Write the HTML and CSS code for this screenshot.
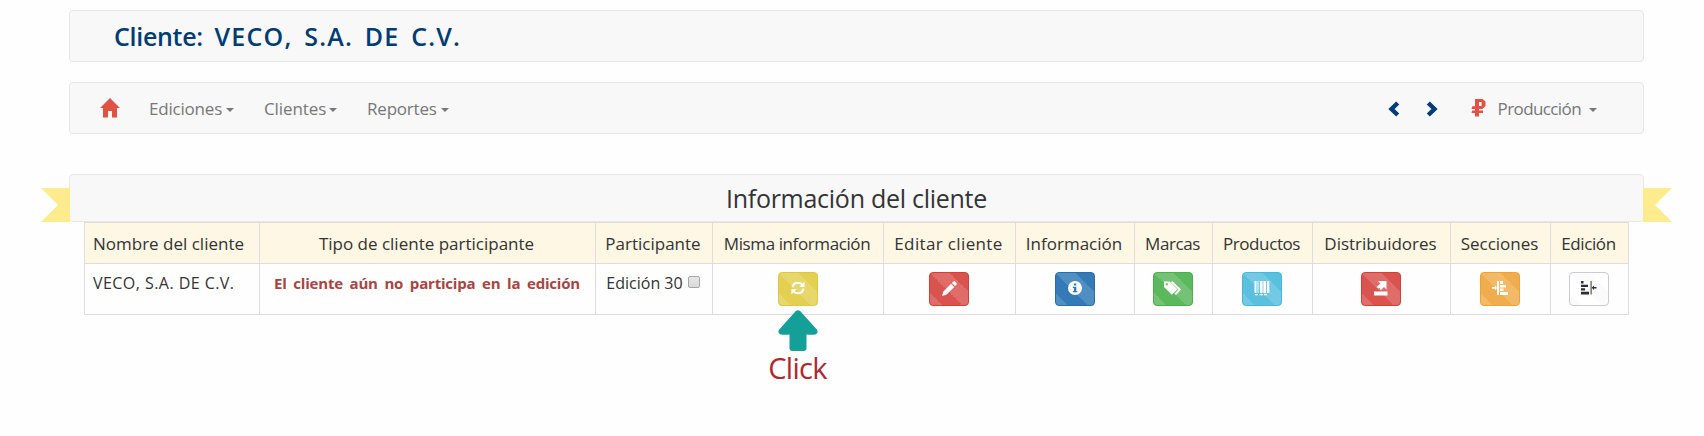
FILE: index.html
```html
<!DOCTYPE html>
<html lang="es">
<head>
<meta charset="utf-8">
<title>Cliente: VECO, S.A. DE C.V.</title>
<link rel="stylesheet" href="styles.css">
</head>
<body>
<div class="container">
  <header class="bar title-bar"><h1><span class="label">Cliente:</span> VECO, S.A. DE C.V.</h1></header>

  <nav class="bar nav-bar">
    <a class="home"><svg width="20" height="20" viewBox="0 0 20 20"><path fill="#df5244" d="M10 0 20 10H17V19.5H12V13H8V19.5H3V10H0Z"/></svg></a>
    <a class="menu ediciones"><span>Ediciones</span><i class="caret"></i></a>
    <a class="menu clientes"><span>Clientes</span><i class="caret"></i></a>
    <a class="menu reportes"><span>Reportes</span><i class="caret"></i></a>
    <div class="nav-right">
      <svg class="prev" width="12" height="16" viewBox="0 0 12 16"><path d="M9.7 2 3.5 8 9.7 14" fill="none" stroke="#003c78" stroke-width="4.4"/></svg>
      <svg class="next" width="12" height="16" viewBox="0 0 12 16"><path d="M2.3 2 8.5 8 2.3 14" fill="none" stroke="#003c78" stroke-width="4.4"/></svg>
      <svg class="ruble" width="15" height="18" viewBox="0 0 15 18"><path fill="#df5244" fill-rule="evenodd" d="M4 0H11.5L14.5 2.5V7L11.5 10H8V11.5H12V14H8V17.5H4V14H0.5L1.2 11.5H4V10H0.5L1.2 7.2H4ZM8 3V7H10.6V3Z"/></svg>
      <a class="menu produccion"><span>Producción</span><i class="caret"></i></a>
    </div>
  </nav>

  <section class="panel">
    <i class="ribbon ribbon-left"></i><i class="ribbon ribbon-right"></i>
    <h2>Información del cliente</h2>
  </section>

  <table>
    <colgroup><col class="c1"><col class="c2"><col class="c3"><col class="c4"><col class="c5"><col class="c6"><col class="c7"><col class="c8"><col class="c9"><col class="c10"><col class="c11"></colgroup>
    <thead>
      <tr>
        <th class="left">Nombre del cliente</th>
        <th class="tipo">Tipo de cliente participante</th>
        <th>Participante</th>
        <th class="misma">Misma información</th>
        <th class="editar">Editar cliente</th>
        <th>Información</th>
        <th class="tight">Marcas</th>
        <th class="tight">Productos</th>
        <th>Distribuidores</th>
        <th>Secciones</th>
        <th class="tight">Edición</th>
      </tr>
    </thead>
    <tbody>
      <tr>
        <td class="left name">VECO, S.A. DE C.V.</td>
        <td class="warning">El cliente aún no participa en la edición</td>
        <td><label class="edition">Edición 30<i class="checkbox"></i></label></td>
        <td><a class="btn yellow"><svg width="14" height="14" viewBox="0 0 14 14"><g fill="none" stroke="#fff" stroke-width="2"><path d="M1.5 6.2C2 3.5 4.3 1.7 7 1.7 8.8 1.7 10.2 2.4 11.3 3.6M12.5 7.8C12 10.5 9.7 12.3 7 12.3 5.2 12.3 3.8 11.6 2.7 10.4"/></g><path fill="#fff" d="M13.6.6V6H8.3ZM.4 13.4V8H5.7Z"/></svg></a></td>
        <td><a class="btn red"><svg width="15" height="15" viewBox="0 0 15 15"><path fill="#fff" d="M0 15 1.3 10.6 9.1 2.8 12.2 5.9 4.4 13.7ZM9.9 2 11.5.4Q12.3-.2 13.1.5L14.5 1.9Q15.2 2.7 14.6 3.5L13 5.1Z"/></svg></a></td>
        <td><a class="btn blue"><svg width="14" height="14" viewBox="0 0 14 14"><circle cx="7" cy="7" r="7" fill="#fff"/><path fill="#337ab7" d="M5.8 2.5H8.3V4.6H5.8ZM4.8 5.8H8.3V10H9.4V11.3H4.8V10H5.9V7.1H4.8Z"/></svg></a></td>
        <td><a class="btn green"><svg width="18" height="14" viewBox="0 0 18 14"><path fill="#fff" fill-rule="evenodd" d="M0 .6H5.5L13.3 8.2 7.8 13.7 0 6ZM2.8 2A1.2 1.2 0 1 0 2.8 4.4 1.2 1.2 0 1 0 2.8 2Z"/><path d="M7.6.8 15.8 8.5 11.2 13.3" fill="none" stroke="#fff" stroke-width="1.9"/></svg></a></td>
        <td><a class="btn cyan"><svg width="16" height="15" viewBox="0 0 16 15"><path fill="#fff" d="M.5 0H2.5V12H.5ZM3.5 0H4.5V12H3.5ZM6 0H8.6V12H6ZM9.4 0H12V12H9.4ZM13 0H15.3V12H13ZM1 13H4V14.3H1ZM5.5 13H9V14.3H5.5ZM10 13H13V14.3H10Z"/></svg></a></td>
        <td><a class="btn red"><svg width="14" height="15" viewBox="0 0 14 15"><path fill="#fff" d="M0 10.5H13.5V14.5H0ZM4 0H12.5V8.5L10 6 7 9 5.5 8 6.5 6.5 4.5 7.5 2.5 6 6.5 2.5Z"/></svg></a></td>
        <td><a class="btn orange"><svg width="16" height="14" viewBox="0 0 16 14"><path fill="#fff" d="M5 0H7V14H5ZM0 6H3V4.5L5 7 3 9.2V7.8H0ZM8 0H11V3H8ZM8 4H14V6.5H8ZM8 7.5H11.5V10H8ZM8 11H16V14H8Z"/></svg></a></td>
        <td><a class="btn white"><svg width="16" height="14" viewBox="0 0 16 14"><path fill="#2d2c38" d="M0 0H2.5V2.5H0ZM0 3.7H7V6H0ZM0 7.3H4V9.5H0ZM0 10.8H8V13.5H0ZM10.7 6.7 13 4.5V6H15.5V7.4H13V9Z"/><path fill="#e99a45" d="M9 0H10V13.5H9Z"/><path fill="#4c98d0" d="M10 0H11V13.5H10Z"/></svg></a></td>
      </tr>
    </tbody>
  </table>

  <div class="hint">
    <svg width="40" height="41" viewBox="0 0 40 41"><path fill="#14a098" d="M17.6 1.2Q20-.8 22.4 1.2L38.8 19.6Q41 22.8 37.5 24.4 33 25 28.5 24.4V38Q28.5 41 25.5 41H14.5Q11.5 41 11.5 38V24.4Q7 25 2.5 24.4-1 22.8 1.2 19.6Z"/></svg>
    <span>Click</span>
  </div>
</div>
</body>
</html>
```
FILE: styles.css
```css
* { box-sizing: border-box; }
body {
  margin: 0;
  min-height: 100vh;
  background: #fefefe;
  color: #333;
  font: 17px/22px "Open Sans", sans-serif;
}
svg { display: block; flex: none; }
h1, h2 { margin: 0; font-weight: 400; }

.container { width: 1575px; margin-left: 69px; padding-top: 10px; }
.bar {
  display: flex;
  align-items: center;
  height: 52px;
  margin-bottom: 20px;
  border: 1px solid #e7e7e7;
  border-radius: 4px;
  background: #f8f8f8;
}
.title-bar { padding-left: 44px; }
h1 {
  color: #003c74;
  font-size: 25px;
  font-weight: 600;
  line-height: 34px;
  letter-spacing: 1.22px;
  word-spacing: 4px;
  white-space: nowrap;
}
.label { letter-spacing: -.3px; }

.nav-bar { padding: 0 46px 0 30px; margin-bottom: 40px; color: #777; }
.home { margin-right: 29px; }
.menu { display: flex; align-items: center; padding-top: 2px; letter-spacing: -.2px; }
.menu span { white-space: nowrap; }
.caret {
  margin: 1px 0 0 4px;
  border: 4px solid transparent;
  border-top-color: #777;
  border-bottom: 0;
}
.ediciones { width: 115px; }
.clientes { width: 103px; letter-spacing: -.1px; }
.clientes .caret { margin-left: 3px; }
.nav-right { display: flex; align-items: center; margin-left: auto; }
.prev, .next { margin-top: 2px; }
.next { margin-left: 26px; margin-right: 33px; }
.ruble { margin-right: 12px; }
.produccion { letter-spacing: -.6px; }
.produccion .caret { margin-left: 8px; }

.panel {
  position: relative;
  height: 48px;
  border: 1px solid #e7e7e7;
  border-radius: 4px;
  background: #f8f8f8;
  text-align: center;
}
h2 { font-size: 25px; line-height: 46px; letter-spacing: -.27px; }
.ribbon {
  position: absolute;
  top: 13px;
  width: 29px;
  height: 34px;
  background: #feeb8e;
}
.ribbon-left { right: 100%; clip-path: polygon(0 0, 100% 0, 100% 100%, 0 100%, 17px 50%); }
.ribbon-right { left: 100%; clip-path: polygon(0 0, 100% 0, 12px 50%, 100% 100%, 0 100%); }

table {
  width: 1545px;
  margin-left: 15px;
  border: solid #ddd;
  border-width: 1px 0 0 1px;
  border-spacing: 0;
  table-layout: fixed;
}
.c1 { width: 175px; } .c2 { width: 336px; } .c3 { width: 117px; }
.c4 { width: 171px; } .c5 { width: 132px; } .c6 { width: 119px; }
.c7 { width: 78px; } .c8 { width: 100px; } .c9 { width: 138px; }
.c10 { width: 100px; } .c11 { width: 78px; }
th, td {
  border: solid #ddd;
  border-width: 0 1px 1px 0;
  text-align: center;
  white-space: nowrap;
}
th { height: 41px; padding: 2px 2px 0 0; background: #fef7e3; font-weight: 400; }
td { height: 51px; padding: 8px 1px 0 0; vertical-align: top; }
.left { padding-left: 8px; text-align: left; }
.misma { letter-spacing: -.4px; }
.editar { letter-spacing: .36px; }
.tight { letter-spacing: -.4px; }
.name { font-size: 16px; letter-spacing: .45px; }
.warning { color: #a94442; font-size: 15px; font-weight: 700; letter-spacing: -.2px; word-spacing: 3px; }
.edition { display: flex; justify-content: center; padding-right: 1px; font-size: 16px; }
.checkbox {
  width: 12px;
  height: 12px;
  margin: 4px 0 0 5px;
  border: 1px solid #a5a5a5;
  border-radius: 2px;
  background: linear-gradient(#e8e8e8, #d9d9d9);
}

.btn {
  display: flex;
  align-items: center;
  justify-content: center;
  width: 40px;
  height: 34px;
  margin: 0 auto;
  padding-bottom: 2px;
  border: 1px solid;
  border-radius: 4px;
  background-image: linear-gradient(45deg, rgba(255,255,255,.15) 25%, transparent 25%, transparent 50%, rgba(255,255,255,.15) 50%, rgba(255,255,255,.15) 75%, transparent 75%);
  background-size: 40px 40px;
}
.yellow { background-color: #e3d052; border-color: #dcc844; }
.red { background-color: #d9534f; border-color: #d43f3a; }
.blue { background-color: #337ab7; border-color: #2e6da4; }
.green { background-color: #5cb85c; border-color: #4cae4c; }
.cyan { background-color: #5bc0de; border-color: #46b8da; }
.orange { background-color: #f0ad4e; border-color: #eea236; }
.white {
  border-color: #ccc;
  background-color: #fff;
  background-image: linear-gradient(45deg, #fbfbfb 25%, transparent 25%, transparent 50%, #fbfbfb 50%, #fbfbfb 75%, transparent 75%);
}

/* Callout pointing at the refresh button, overlapping the table's lower edge */
.hint {
  position: relative;
  display: flex;
  flex-direction: column;
  align-items: center;
  width: 171px;
  margin: -5px 0 0 643px;
  color: #b0282c;
  font-size: 29px;
  line-height: 34px;
  letter-spacing: -.7px;
}
```
